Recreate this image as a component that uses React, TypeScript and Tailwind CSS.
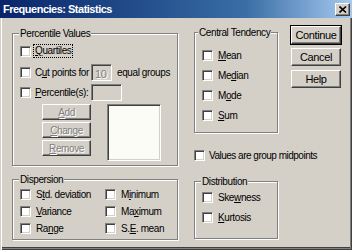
import type { ReactNode } from 'react';

/* Win2000-style SPSS "Frequencies: Statistics" dialog */

function Check() {
  return (
    <span className="block w-[11px] h-[11px] shrink-0 bg-white border border-t-[#808080] border-l-[#808080] border-r-white border-b-white shadow-[inset_1px_1px_0_#404040,inset_-1px_-1px_0_#d4d0c8]" />
  );
}

function Group({ title, className, labelClass, children }: { title: string; className: string; labelClass: string; children: ReactNode }) {
  return (
    <div className={`relative shrink-0 border border-[#808080] shadow-[inset_1px_1px_0_#fff,1px_1px_0_#fff] ${className}`}>
      <span className={`absolute top-[-6px] bg-[#d4d0c8] px-[1px] leading-[12px] ${labelClass}`}>{title}</span>
      {children}
    </div>
  );
}

function Btn({ children, className = '', disabled = false }: { children: ReactNode; className?: string; disabled?: boolean }) {
  return (
    <div
      className={`flex items-center justify-center shrink-0 bg-[#d4d0c8] border border-t-white border-l-white border-r-[#404040] border-b-[#404040] shadow-[inset_-1px_-1px_0_#808080] ${
        disabled ? 'text-[#808080] [text-shadow:1px_1px_0_#fff]' : 'text-black'
      } ${className}`}
    >
      {children}
    </div>
  );
}

function Sunken({ className, children }: { className: string; children?: ReactNode }) {
  return (
    <div className={`shrink-0 border border-t-[#808080] border-l-[#808080] border-r-white border-b-white shadow-[inset_1px_1px_0_#404040,inset_-1px_-1px_0_#d4d0c8] ${className}`}>
      {children}
    </div>
  );
}

function Row({ label, className = '' }: { label: ReactNode; className?: string }) {
  return (
    <div className={`flex items-center ${className}`}>
      <Check />
      <span className="ml-[5px] whitespace-nowrap">{label}</span>
    </div>
  );
}

export default function App() {
  return (
    <div className="w-[352px] h-[250px] overflow-hidden bg-[#d4d0c8] text-black text-[10px] tracking-[-0.4px] font-['Liberation_Sans',Arial,sans-serif] shadow-[inset_1px_0_0_#d4d0c8,inset_2px_0_0_#fff,inset_-1px_-1px_0_#404040,inset_-2px_-2px_0_#808080,inset_0_-3px_0_#404040]">
      {/* title bar */}
      <div className="flex items-center h-[18px] bg-gradient-to-r from-[#0a246a] via-[#3a6ea5] via-70% to-[#a6caf0]">
        <span className="pl-[3px] text-white font-bold text-[11px] tracking-[-0.5px]">Frequencies: Statistics</span>
        <div className="ml-auto mr-[2px] flex items-center justify-center w-[15px] h-[13px] bg-[#d4d0c8] border border-t-white border-l-white border-r-[#404040] border-b-[#404040] shadow-[inset_-1px_-1px_0_#808080]">
          <svg width="8" height="7" viewBox="0 0 8 7">
            <path d="M0.5 0.5 L7 6.5 M7 0.5 L0.5 6.5" stroke="#000" strokeWidth="1.6" />
          </svg>
        </div>
      </div>

      <div className="flex">
        {/* left column */}
        <div className="flex flex-col pl-[12px] shrink-0">
          <Group title="Percentile Values" className="mt-[15px] w-[166px] h-[133px]" labelClass="left-[6px]">
            <div className="flex flex-col pt-[8px] pl-[7px]">
              <div className="flex items-center h-[18px]">
                <Check />
                <span className="ml-[3px] px-[1px] leading-[12px] outline outline-1 outline-dotted outline-black">
                  <u>Q</u>uartiles
                </span>
              </div>
              <div className="flex items-center h-[18px] mt-[3px]">
                <Check />
                <span className="ml-[4px] w-[56px] whitespace-nowrap">
                  C<u>u</u>t points for
                </span>
                <Sunken className="w-[21px] h-[17px] bg-[#d4d0c8] pl-[3px] pt-[1px] text-[11px] text-[#808080] [text-shadow:1px_1px_0_#fff]">
                  10
                </Sunken>
                <span className="ml-[5px] whitespace-nowrap">equal groups</span>
              </div>
              <div className="flex items-center h-[18px] mt-[2px]">
                <Check />
                <span className="ml-[4px] w-[56px] whitespace-nowrap">
                  <u>P</u>ercentile(s):
                </span>
                <Sunken className="w-[31px] h-[17px] bg-[#d4d0c8]" />
              </div>
              <div className="flex mt-[3px] pl-[22px]">
                <div className="flex flex-col gap-[2px]">
                  <Btn disabled className="w-[49px] h-[16px]">
                    <u>A</u>dd
                  </Btn>
                  <Btn disabled className="w-[49px] h-[16px]">
                    <u>C</u>hange
                  </Btn>
                  <Btn disabled className="w-[49px] h-[16px]">
                    <u>R</u>emove
                  </Btn>
                </div>
                <Sunken className="ml-[16px] w-[54px] h-[57px] bg-[#fcfcf6]" />
              </div>
            </div>
          </Group>

          <Group title="Dispersion" className="mt-[13px] w-[166px] h-[61px]" labelClass="left-[6px]">
            <div className="grid grid-cols-[85px_1fr] auto-rows-[17px] pt-[6px] pl-[7px]">
              <Row label={<>S<u>t</u>d. deviation</>} />
              <Row label={<>M<u>i</u>nimum</>} />
              <Row label={<><u>V</u>ariance</>} />
              <Row label={<>Ma<u>x</u>imum</>} />
              <Row label={<>Ra<u>n</u>ge</>} />
              <Row label={<>S.<u>E</u>. mean</>} />
            </div>
          </Group>
        </div>

        {/* middle column */}
        <div className="flex flex-col ml-[16px] w-[84px] shrink-0">
          <Group title="Central Tendency" className="mt-[14px] w-[84px] h-[101px]" labelClass="left-[3px]">
            <div className="flex flex-col pt-[12px] pl-[7px]">
              <Row className="h-[20px]" label={<><u>M</u>ean</>} />
              <Row className="h-[20px]" label={<>Me<u>d</u>ian</>} />
              <Row className="h-[20px]" label={<>M<u>o</u>de</>} />
              <Row className="h-[20px]" label={<><u>S</u>um</>} />
            </div>
          </Group>

          <div className="flex items-center h-[14px] mt-[15px]">
            <Check />
            <span className="ml-[4px] whitespace-nowrap tracking-[-0.5px]">Values are group midpoints</span>
          </div>

          <Group title="Distribution" className="mt-[19px] w-[84px] h-[58px]" labelClass="left-[6px]">
            <div className="flex flex-col pt-[5px] pl-[7px]">
              <Row className="h-[20px]" label={<>Ske<u>w</u>ness</>} />
              <Row className="h-[20px]" label={<><u>K</u>urtosis</>} />
            </div>
          </Group>
        </div>

        {/* right buttons */}
        <div className="flex flex-col items-start ml-[12px] shrink-0">
          <div className="mt-[7px] border border-black">
            <Btn className="w-[50px] h-[18px] text-[11px]">Continue</Btn>
          </div>
          <Btn className="mt-[3px] ml-[1px] w-[50px] h-[18px] text-[11px]">Cancel</Btn>
          <Btn className="mt-[4px] ml-[1px] w-[50px] h-[18px] text-[11px]">Help</Btn>
        </div>
      </div>
    </div>
  );
}
